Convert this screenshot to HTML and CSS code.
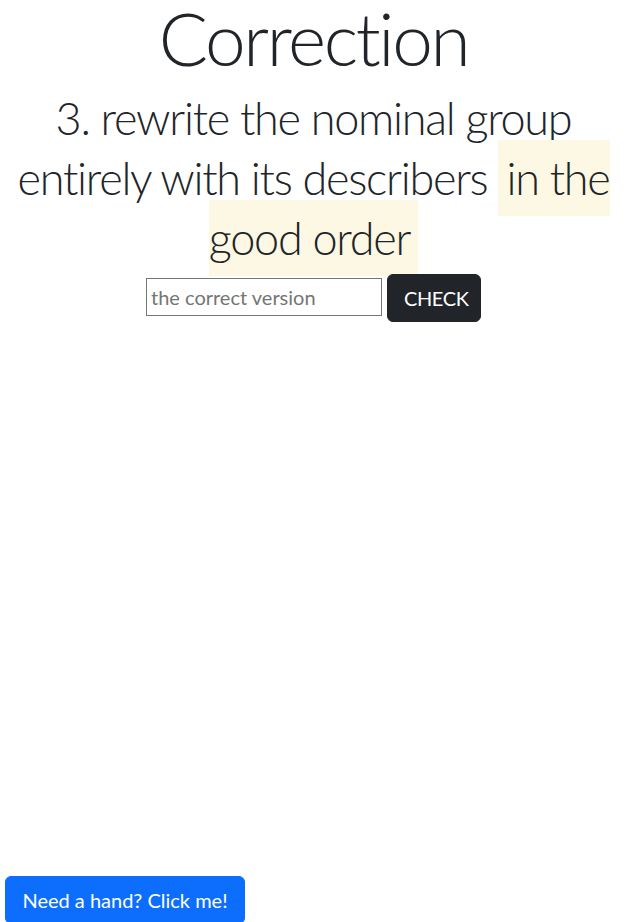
FILE: index.html
```html
<!DOCTYPE html>
<html lang="en">
<head>
<meta charset="utf-8">
<title>Correction</title>
<link rel="stylesheet" href="styles.css">
</head>
<body>
<main class="page">
  <h1 class="title">Correction</h1>
  <h2 class="question">3. rewrite the nominal group entirely with its describers <mark class="hl">in the good order</mark></h2>
  <form class="answer">
    <input class="answer-input" type="text" placeholder="the correct version">
    <button class="btn btn-dark" type="button">CHECK</button>
  </form>
</main>
<button class="btn btn-primary help" type="button">Need a hand? Click me!</button>
</body>
</html>
```

FILE: styles.css
```css
html, body {
  margin: 0;
  padding: 0;
  background: #fff;
  color: #212529;
  font-family: Lato, "Open Sans", sans-serif;
  font-variant-ligatures: none;
}

.page {
  text-align: center;
}

.title {
  margin: 0 0 10px;
  font-size: 73px;
  font-weight: 300;
  line-height: 76px;
  letter-spacing: -0.033em;
}

.question {
  margin: 0;
  padding-top: 2px;
  font-size: 45px;
  font-weight: 300;
  line-height: 60px;
  letter-spacing: -0.028em;
}

.hl {
  background: #fcf8e3;
  color: #212529;
  padding: 11px 8px;
}

.answer {
  margin: 6px 0 0;
  display: flex;
  justify-content: center;
  align-items: center;
  gap: 5px;
}

.answer-input {
  box-sizing: border-box;
  width: 236px;
  height: 38px;
  border: 1px solid #767676;
  padding: 0 4px;
  font-family: Lato, sans-serif;
  font-size: 20px;
  color: #212529;
  margin-top: -2px;
}

.answer-input::placeholder {
  color: #757575;
}

.btn {
  box-sizing: border-box;
  height: 48px;
  padding: 0 16px;
  border: 1px solid transparent;
  border-radius: 6px;
  font-family: Lato, sans-serif;
  font-size: 20px;
  color: #fff;
  cursor: pointer;
}

.btn-dark {
  background: #212529;
  border-color: #212529;
  width: 94px;
  letter-spacing: -0.02em;
}

.btn-primary {
  background: #0d6efd;
  border-color: #0d6efd;
}

.help {
  position: fixed;
  left: 5px;
  top: 876px;
  width: 240px;
}
```
